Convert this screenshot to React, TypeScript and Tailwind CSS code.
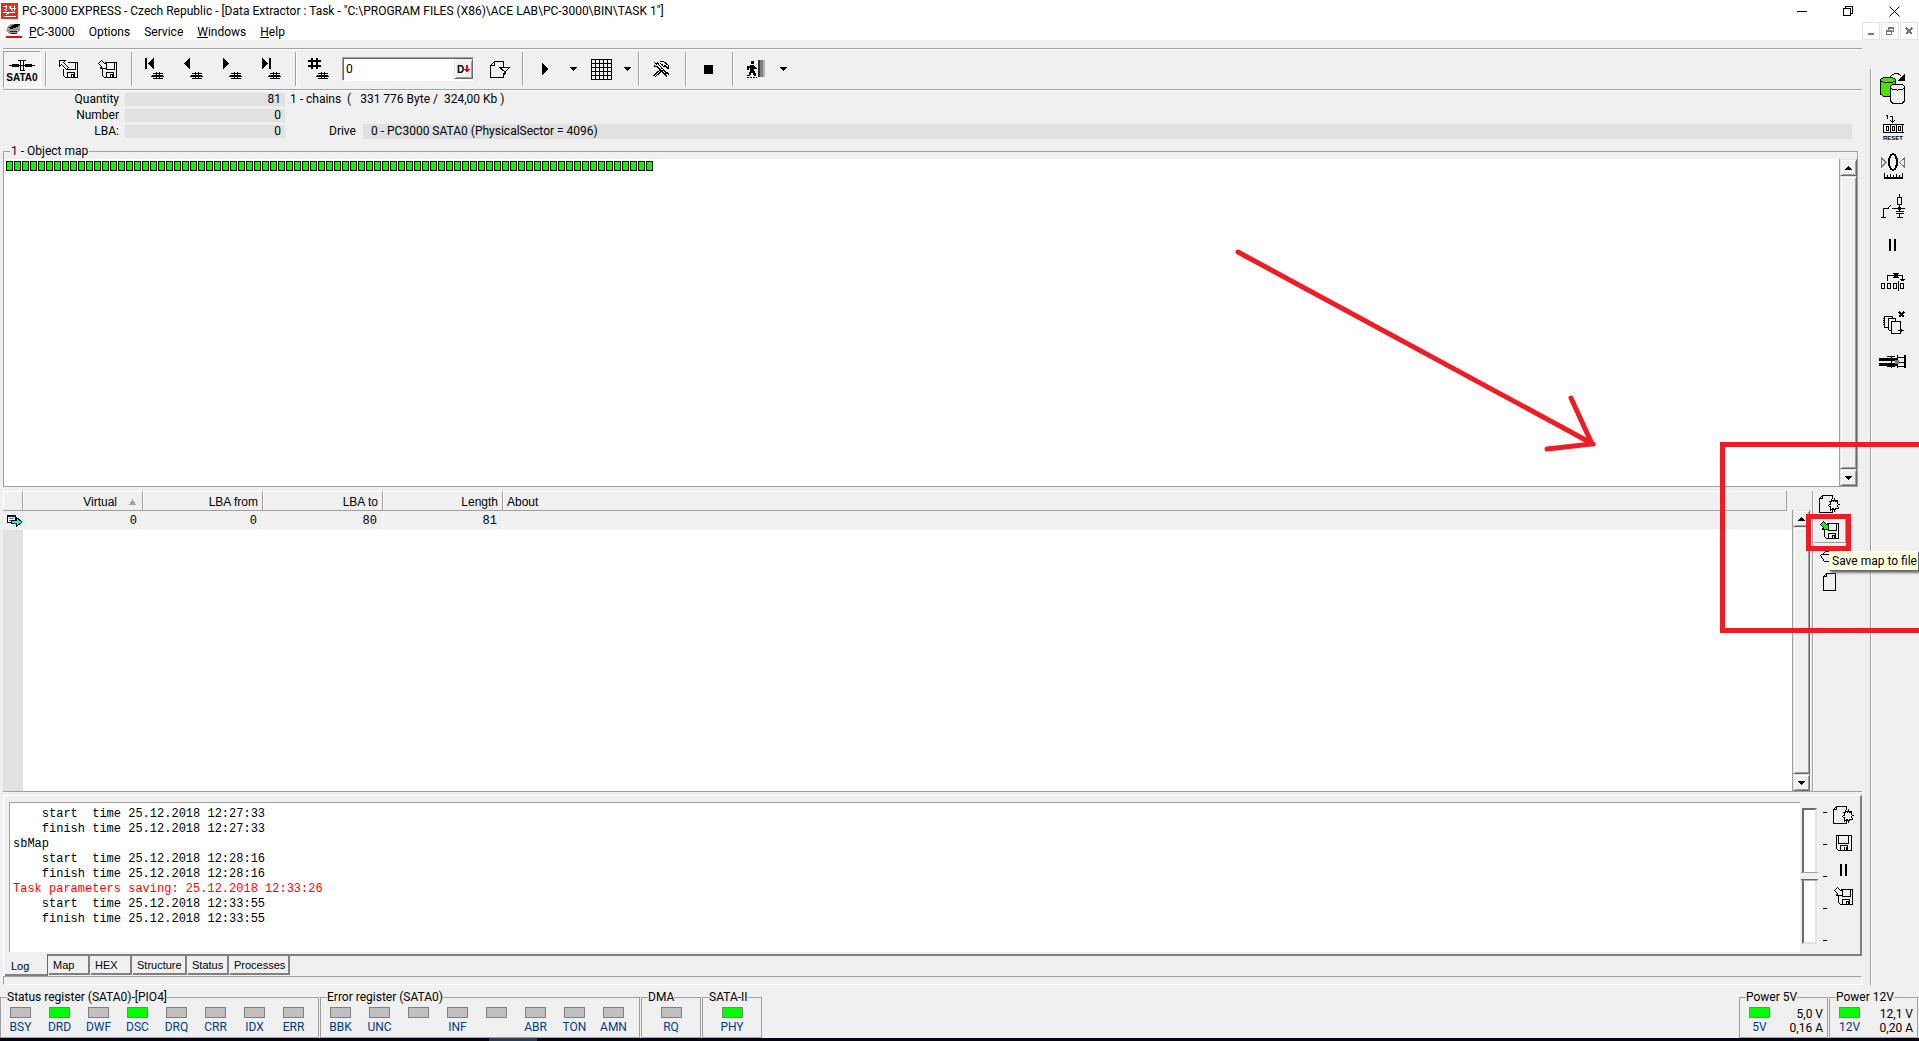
import type { ReactNode } from 'react';

type PxProps = { w: number; h: number; children: ReactNode };

// Small bitmap-like drawing, one unit per pixel
function Px({ w, h, children }: PxProps) {
  return (
    <svg
      width={w}
      height={h}
      viewBox={`0 0 ${w} ${h}`}
      fill="none"
      stroke="#000"
      shapeRendering="crispEdges"
      className="shrink-0"
      aria-hidden="true"
    >
      {children}
    </svg>
  );
}

function Floppy() {
  return (
    <>
      <path d="M8.5 2.5H18.5V17.5H6.5L4.5 15.5V8.5" />
      <path d="M16.5 3V9.5H7.5M8.5 17v-5h7v5M12 14.5h2v3h-2z" />
    </>
  );
}

function ImportIcon() {
  return (
    <Px w={20} h={19}>
      <Floppy />
      <path d="M.5 .5H6.5L4.5 2.5L9.5 7.5L7.5 9.5L2.5 4.5L.5 6.5Z" fill="#f0f0f0" />
    </Px>
  );
}

function SaveIcon({ fill = '#f0f0f0' }: { fill?: string }) {
  return (
    <Px w={20} h={19}>
      <Floppy />
      <path d="M3.5 .5L6.5 3.5L8.5 2.5V8.5H2.5L3.5 6.5L.5 3.5Z" fill={fill} />
    </Px>
  );
}

function DiskIcon() {
  return (
    <Px w={16} h={16}>
      <path d="M.5 .5H15.5V15.5H2.5L.5 13.5ZM2.5 .5V8.5H12.5V.5M4.5 15V10.5h7V15M8.5 12v4M10 12v4" />
    </Px>
  );
}

function Chip() {
  return (
    <>
      <path d="M8 15.5h10M6 18h13M8 20.5h10" />
      <path d="M7 18h11" strokeWidth="2" />
      <path d="M11.5 14v7M14.5 14v7" />
    </>
  );
}

function FirstIcon() {
  return (
    <Px w={20} h={22}>
      <path d="M0 0h2v11h-2zM9 0v11L3 5.5z" fill="#000" stroke="none" />
      <Chip />
    </Px>
  );
}

function PrevIcon() {
  return (
    <Px w={20} h={22}>
      <path d="M6 0v11L0 5.5z" fill="#000" stroke="none" />
      <Chip />
    </Px>
  );
}

function NextIcon() {
  return (
    <Px w={20} h={22}>
      <path d="M0 0v11l6-5.5z" fill="#000" stroke="none" />
      <Chip />
    </Px>
  );
}

function LastIcon() {
  return (
    <Px w={20} h={22}>
      <path d="M0 0v11l6-5.5zM7 0h2v11h-2z" fill="#000" stroke="none" />
      <Chip />
    </Px>
  );
}

function HashIcon() {
  return (
    <Px w={22} h={22}>
      <path d="M4 0v11M9 0v11M0 3h13M0 8h13" strokeWidth="2" />
      <g transform="translate(2 0)">
        <Chip />
      </g>
    </Px>
  );
}

function SataIcon() {
  return (
    <Px w={26} h={13}>
      <path d="M0 6.5h26" />
      <path d="M3 6.5h7M16 6.5h7" strokeWidth="3" />
      <path d="M11.5 1v11M14.5 1v11M9 1.5h8M12 11.5h4" />
    </Px>
  );
}

function PageFilterIcon() {
  return (
    <Px w={21} h={19}>
      <path d="M13.5 7V1.5H4.5L.5 5.5V17.5H13.5V13M.5 5.5H4.5V1.5" />
      <path d="M9.5 7.5H19.5L15.5 11.5V13.5L14.5 14.5V11.5Z" fill="#f0f0f0" />
    </Px>
  );
}

function PageGearIcon() {
  return (
    <Px w={21} h={19}>
      <path d="M13.5 4V.5H3.5L.5 3.5V17.5H13.5V15M.5 3.5H3.5V.5" />
      <path
        d="M12.5 4.5L14.5 6.5L15.5 4.5L16.500 6.5L18.500 5.5V8.5L20 9.500L18.500 10.5L19.500 14L16.500 13.5L15.500 15.500L14.500 13.500L11.500 15V12L9.500 10.500L12 9L10.500 6.500H12.500Z"
        fill="#f0f0f0"
      />
    </Px>
  );
}

function PageIcon() {
  return (
    <Px w={14} h={19}>
      <path d="M3.5 .5H12.5V17.5H.5V3.5ZM.5 3.5H3.5V.5" />
    </Px>
  );
}

function FolderIcon() {
  return (
    <Px w={20} h={13}>
      <path d="M3.5 4.5V3.5L5.5 1.5H11.5V3.5H18.5M.5 4.5H18.5V11.5H4.5L.5 5.5" />
    </Px>
  );
}

function PlayIcon() {
  return (
    <Px w={7} h={12}>
      <path d="M0 0v12l7-6z" fill="#000" stroke="none" />
    </Px>
  );
}

function CaretIcon() {
  return (
    <Px w={7} h={4}>
      <path d="M0 0h7l-3.5 4z" fill="#000" stroke="none" />
    </Px>
  );
}

function GridIcon() {
  return (
    <Px w={21} h={21}>
      <path d="M.5 .5h20v20H.5zM4.5 0v21M8.5 0v21M12.5 0v21M16.5 0v21M0 4.5h21M0 8.5h21M0 12.5h21M0 16.5h21" />
    </Px>
  );
}

function ToolsIcon() {
  return (
    <Px w={17} h={16}>
      <path d="M1.5 1.5L3.5 3.5L4.5 1.5L6 4L13.5 12L12 13.5L4.5 6L1.5 5.5V3.500" />
      <path d="M12 13.500l2 2M14 11.500l2 2" />
      <path d="M6.500 .5H10.500L15.500 4.500V7.500L13.500 6.500L12.500 4.500L10.500 5.500L9 3.500L7 2" />
      <path d="M9.500 6.500L1 14.500L2.500 15.500L10.500 8.500" />
    </Px>
  );
}

function ExitIcon() {
  return (
    <Px w={20} h={19}>
      <path d="M5 1h3v3H5zM4 5h4v5H4zM1 6h3v2H3v2H1zM8 6l3 2v1H8zM4 10h4l2 4v2H8l-2-4-2 4H1v-1h2z" fill="#000" stroke="none" />
      <path d="M1 17.5h10" strokeDasharray="2 1" />
      <path d="M12 0h2v17h-2z" fill="#333" stroke="none" />
      <path d="M14 0h3v17h-3z" fill="#808080" stroke="none" />
      <path d="M17 0h2v17h-2z" fill="#b5b5b5" stroke="none" />
    </Px>
  );
}

function PauseIcon() {
  return (
    <Px w={8} h={12}>
      <path d="M0 0h2v12H0zM5 0h2v12H5z" fill="#000" stroke="none" />
    </Px>
  );
}

function CopyDisksIcon() {
  return (
    <Px w={26} h={32}>
      <path d="M.5 7V21L3 23H15V7Z" fill="#4be100" stroke="none" />
      <path d="M.5 7V21L3.5 23.5H10M15.5 7V12" />
      <ellipse cx="8" cy="7" rx="7.5" ry="2.5" fill="#4be100" />
      <path d="M10.5 14V28L13 30.5H22L24.5 28V14Z" fill="#f0f0f0" />
      <ellipse cx="17.5" cy="14" rx="7" ry="3" fill="#f0f0f0" />
      <path d="M10 4L12 2L15 .5H18L21 3" />
      <path d="M25 0v8h-7z" fill="#000" stroke="none" />
    </Px>
  );
}

function ResetIcon() {
  return (
    <Px w={21} h={27}>
      <path d="M3 1.5h1.5V5M7 2.5h2.5V8M7 6l2.5 2.5L12 6" />
      <path d="M0 10.5H21M0 18.5H21M.5 10v9M7.5 10v9M13.5 10v9M19.5 10v9M3 12.5h2v4H3zM9.5 12.5h2v4h-2zM15.5 12.5h2v4h-2z" />
      <text x="0" y="26" fontSize="6" fontWeight="700" fontFamily="Liberation Sans, sans-serif" fill="#000" stroke="none">
        RESET
      </text>
    </Px>
  );
}

function ZeroIcon() {
  return (
    <Px w={24} h={27}>
      <ellipse cx="12" cy="9" rx="4" ry="8" strokeWidth="2" />
      <path d="M.5 5V14L5 9.5ZM23.5 5V14L18.5 9.5Z" stroke="#777" />
      <path d="M3 25H22" strokeWidth="2" />
      <path d="M3.5 20v4M6.5 22v2M9.5 21v3M12.5 22v2M15.5 21v3M18.5 22v2M21.5 20v4" />
    </Px>
  );
}

function CircuitIcon() {
  return (
    <Px w={24} h={24}>
      <path d="M0 23.5h5M2.5 23V14.5H7L10 11M11 14.5H24M18.5 0v3M16.5 3.5h4v7h-4zM18.5 11v6M15 17.5h8M15 19.5h8M18.5 20v3M16 23.5h6" />
      <path d="M17 13h3v3h-3z" fill="#000" stroke="none" />
    </Px>
  );
}

function SkipIcon() {
  return (
    <Px w={24} h={20}>
      <path d="M.5 11.5h3v5h-3zM6.5 11.5h3v5h-3zM12.5 11.5h3v5h-3zM19.5 11.5h3v5h-3zM17.5 9v10M6.5 9V3.5H21.5V7M19 7.5h5M20 8.5h3" />
      <path d="M13 1l4 5M17 1l-4 5" strokeWidth="2" />
    </Px>
  );
}

function PagesIcon() {
  return (
    <Px w={23} h={24}>
      <path d="M2.5 16V5.5h8V8M1 7.5h2M1 9.5h2M1 11.5h2M1 13.5h2M2 16.5h5" />
      <path d="M6.5 19V7.5h7V11M6.5 19.5h3" />
      <path d="M9.5 10.5h9v12h-9z" fill="#f0f0f0" />
      <path d="M16 19.5h6M19 18v3" />
      <path d="M17 1l5 5M22 1l-5 5" strokeWidth="2" />
    </Px>
  );
}

function ConnectorIcon() {
  return (
    <Px w={28} h={14}>
      <path d="M0 4h18M0 9h18" strokeWidth="3" />
      <path d="M8 1.5h8M8 11.5h8M12 1v12M18.5 0v13M18 2.5h8M18 7h8M18 11.5h8" />
      <path d="M26 0v13" strokeWidth="2" />
      <path d="M16 5h4v4h-4z" fill="#777" stroke="none" />
    </Px>
  );
}

function AppIcon() {
  return (
    <Px w={17} h={16}>
      <path d="M0 0h17v16H0z" fill="#e8291c" stroke="none" />
      <path d="M2 3.5h3M5 2v4M3 6l3 2M8 3l4 5M8 6V3.5h3M13.5 2v6M11 5.5h4M2 9.5h12M3 13.5h12M5 12l4-3" stroke="#fff" />
    </Px>
  );
}

function DocIcon() {
  return (
    <Px w={16} h={14}>
      <path d="M2 2L5 0H14V6L10 10H4L0 7Z" fill="#999" stroke="none" />
      <path d="M2 4L9 0H14L12 3L5 5Z" fill="#000" stroke="none" />
      <path d="M4 7.5h7M5 9.5h6" stroke="#222" />
      <path d="M0 13h16" stroke="#f00" strokeWidth="2" />
    </Px>
  );
}

const raised =
  'bg-[#f0f0f0] border border-t-[#e3e3e3] border-l-[#e3e3e3] border-r-[#696969] border-b-[#696969] shadow-[inset_1px_1px_0_#fff,inset_-1px_-1px_0_#a0a0a0]';

function ToolButton({ label, className = 'w-[39px]', children }: { label: string; className?: string; children: ReactNode }) {
  return (
    <button type="button" aria-label={label} className={`flex h-full shrink-0 items-center justify-center ${className}`}>
      {children}
    </button>
  );
}

function Separator() {
  return <div className="ml-1 mr-0.5 h-[34px] w-0.5 shrink-0 border-l border-r border-l-[#a0a0a0] border-r-white" />;
}

function ScrollBar() {
  return (
    <div className="flex w-[18px] shrink-0 flex-col border-l border-[#a0a0a0] bg-[#f0f0f0]">
      <button type="button" aria-label="Scroll up" className={`flex h-[17px] shrink-0 items-center justify-center ${raised}`}>
        <Px w={7} h={4}>
          <path d="M0 4h7l-3.5-4z" fill="#000" stroke="none" />
        </Px>
      </button>
      <div className={`flex-1 ${raised}`} />
      <button type="button" aria-label="Scroll down" className={`flex h-[17px] shrink-0 items-center justify-center ${raised}`}>
        <CaretIcon />
      </button>
    </div>
  );
}

function TitleBar() {
  return (
    <header className="bg-white">
      <div className="flex h-[22px] items-center">
        <div className="ml-px">
          <AppIcon />
        </div>
        <h1 className="ml-1 flex-1 text-xs">
          PC-3000 EXPRESS - Czech Republic - [Data Extractor : Task - "C:\PROGRAM FILES (X86)\ACE LAB\PC-3000\BIN\TASK 1"]
        </h1>
        <button type="button" aria-label="Minimize" className="flex w-[46px] justify-center">
          <Px w={10} h={10}>
            <path d="M0 5.5h10" />
          </Px>
        </button>
        <button type="button" aria-label="Restore" className="flex w-[46px] justify-center">
          <Px w={10} h={10}>
            <path d="M.5 2.5h7v7h-7zM2.5 2V.5h7v7H8" />
          </Px>
        </button>
        <button type="button" aria-label="Close" className="flex w-[46px] justify-center">
          <svg width="11" height="11" viewBox="0 0 11 11" stroke="#000" aria-hidden="true">
            <path d="M.5 .5l10 10M10.5 .5l-10 10" />
          </svg>
        </button>
        <div className="w-0.5" />
      </div>
      <div className="flex h-[18px] items-center">
        <div className="ml-1.5">
          <DocIcon />
        </div>
        <nav className="ml-[7px] flex flex-1 gap-3.5 pt-0.5 text-xs">
          <button type="button"><u>P</u>C-3000</button>
          <button type="button">Options</button>
          <button type="button">Service</button>
          <button type="button"><u>W</u>indows</button>
          <button type="button"><u>H</u>elp</button>
        </nav>
        <div className="mr-px flex gap-px">
          <button type="button" aria-label="Minimize child" className="flex h-[18px] w-[18px] items-center justify-center border border-[#e3e3e3]">
            <Px w={8} h={8}>
              <path d="M1 7h6" stroke="#777" strokeWidth="2" />
            </Px>
          </button>
          <button type="button" aria-label="Restore child" className="flex h-[18px] w-[18px] items-center justify-center border border-[#e3e3e3]">
            <Px w={8} h={8}>
              <path d="M.5 3.5h5v4h-5zM0 4.5h6M2.5 3V.5h5v4H6M2 1.5h6" stroke="#777" />
            </Px>
          </button>
          <button type="button" aria-label="Close child" className="flex h-[18px] w-[18px] items-center justify-center border border-[#e3e3e3]">
            <Px w={8} h={8}>
              <path d="M1 1l6 6M7 1l-6 6" stroke="#777" strokeWidth="2" />
            </Px>
          </button>
        </div>
      </div>
    </header>
  );
}

function Toolbar() {
  return (
    <div className="flex h-[42px] items-center border-y border-[#a0a0a0] shadow-[inset_0_1px_0_#fff,0_1px_0_#fff]">
      <button
        type="button"
        className="flex h-[37px] w-[38px] shrink-0 flex-col items-center justify-center border border-r-white border-b-white border-l-[#a0a0a0] border-t-[#a0a0a0] bg-[#f4f4f4] pt-1"
      >
        <SataIcon />
        <span className="font-['Liberation_Sans',sans-serif] text-[10px] font-bold leading-3">SATA0</span>
      </button>
      <Separator />
      <ToolButton label="Load task"><ImportIcon /></ToolButton>
      <ToolButton label="Save task"><SaveIcon /></ToolButton>
      <Separator />
      <ToolButton label="First"><FirstIcon /></ToolButton>
      <ToolButton label="Previous"><PrevIcon /></ToolButton>
      <ToolButton label="Next"><NextIcon /></ToolButton>
      <ToolButton label="Last"><LastIcon /></ToolButton>
      <Separator />
      <ToolButton label="Go to number"><HashIcon /></ToolButton>
      <div className="ml-1 flex h-6 w-[132px] shrink-0 border border-b-white border-l-[#a0a0a0] border-r-white border-t-[#a0a0a0] bg-white shadow-[inset_1px_1px_0_#696969]">
        <input aria-label="Number" defaultValue="0" className="w-0 flex-1 pl-[3px] text-xs outline-none" />
        <button type="button" aria-label="Decimal" className={`my-px flex w-[19px] items-center justify-center ${raised}`}>
          <span className="font-['Liberation_Sans',sans-serif] text-[10px] font-bold">D</span>
          <Px w={6} h={8}>
            <path d="M2 0h2v4h2L3 8 0 4h2z" fill="#f00" stroke="none" />
          </Px>
        </button>
      </div>
      <ToolButton label="Filter" className="ml-2 w-9"><PageFilterIcon /></ToolButton>
      <Separator />
      <ToolButton label="Start"><PlayIcon /></ToolButton>
      <ToolButton label="Start options" className="w-[17px]"><CaretIcon /></ToolButton>
      <ToolButton label="Grid"><GridIcon /></ToolButton>
      <ToolButton label="Grid options" className="w-[13px]"><CaretIcon /></ToolButton>
      <Separator />
      <ToolButton label="Tools"><ToolsIcon /></ToolButton>
      <Separator />
      <ToolButton label="Stop">
        <Px w={9} h={9}>
          <path d="M0 0h9v9H0z" fill="#000" stroke="none" />
        </Px>
      </ToolButton>
      <Separator />
      <ToolButton label="Exit"><ExitIcon /></ToolButton>
      <ToolButton label="Exit options" className="w-[17px]"><CaretIcon /></ToolButton>
    </div>
  );
}

function InfoRow({ label, value, children }: { label: string; value: string; children?: ReactNode }) {
  return (
    <div className="flex h-4 items-center text-xs leading-4">
      <span className="w-[116px] text-right">{label}</span>
      <span className="ml-1.5 h-[13px] w-40 bg-[#e1e1e1] pr-1 text-right leading-[13px]">{value}</span>
      {children}
    </div>
  );
}

function ObjectMap() {
  return (
    <fieldset className="mr-1 flex min-h-0 grow-[345] basis-0 flex-col border border-b-0 border-[#a0a0a0]">
      <legend className="ml-1.5 px-px text-xs leading-4">1 - Object map</legend>
      <div className="flex h-full border-b border-[#a0a0a0] bg-white">
        <div className="flex flex-1 flex-wrap content-start gap-px pl-0.5 pt-0.5">
          {Array.from({ length: 81 }, (_, i) => (
            <div key={i} className="h-2.5 w-[7px] border border-black bg-[#00ff00]" />
          ))}
        </div>
        <ScrollBar />
      </div>
    </fieldset>
  );
}

function ChainTable() {
  const th = 'border-r border-b border-[#a0a0a0] px-1 pt-0.5 font-normal shadow-[inset_1px_1px_0_#fff]';
  const td = 'border-r border-b border-dotted border-white pr-[5px] pt-0.5 text-right';
  return (
    <div className="mt-1 flex min-h-0 grow-[301] basis-0 border-b border-[#a0a0a0]">
      <div className="flex flex-1 flex-col">
        <table className="mr-[5px] table-fixed border-separate border-spacing-0 font-['Liberation_Sans',Arial,sans-serif] text-xs leading-4">
          <colgroup>
            <col className="w-5" />
            <col className="w-[120px]" />
            <col className="w-[120px]" />
            <col className="w-[120px]" />
            <col className="w-[120px]" />
            <col />
          </colgroup>
          <thead>
            <tr className="h-5 text-right">
              <th className={th} aria-label="State" />
              <th className={th}>
                <span className="flex items-center justify-end gap-3 pr-0.5">
                  Virtual
                  <Px w={7} h={6}>
                    <path d="M0 6h7L3.5 0z" fill="#a0a0a0" stroke="none" />
                  </Px>
                </span>
              </th>
              <th className={th}>LBA from</th>
              <th className={th}>LBA to</th>
              <th className={th}>Length</th>
              <th className={`${th} text-left`}>About</th>
            </tr>
          </thead>
          <tbody>
            <tr className="h-[19px] font-['Liberation_Mono','Courier_New',monospace]">
              <td className="pl-1">
                <Px w={16} h={12}>
                  <path d="M.5 .5h8v7h-8z" fill="#fff" />
                  <path d="M0 1h9" stroke="#000080" strokeWidth="2" />
                  <path d="M2 3.5h5M2 5.5h3" stroke="#777" />
                  <path d="M4.5 5.5h5v-3l5.5 4.5-5.5 4.5v-3h-5z" fill="#0ff" />
                </Px>
              </td>
              <td className={td}>0</td>
              <td className={td}>0</td>
              <td className={td}>80</td>
              <td className={td}>81</td>
              <td className={td} />
            </tr>
          </tbody>
        </table>
        <div className="flex flex-1 bg-white">
          <div className="w-5 bg-[#e1e1e1]" />
        </div>
      </div>
      <div className="flex pt-[19px]">
        <ScrollBar />
      </div>
      <div className="ml-0.5 flex w-[50px] flex-col border-l border-[#a0a0a0] shadow-[inset_1px_0_0_#fff]">
        <button type="button" aria-label="New map" className="flex h-[26px] w-[33px] items-center justify-center"><PageGearIcon /></button>
        <button type="button" aria-label="Save map to file" className="flex h-[26px] w-[33px] items-center justify-center border border-b-[#a0a0a0] border-l-white border-r-[#a0a0a0] border-t-white">
          <SaveIcon fill="#00ff00" />
        </button>
        <button type="button" aria-label="Load map from file" className="flex h-[26px] w-[33px] items-center justify-center"><FolderIcon /></button>
        <button type="button" aria-label="Clear map" className="flex h-[26px] w-[33px] items-center justify-center"><PageIcon /></button>
      </div>
    </div>
  );
}

const log = [
  { text: '    start  time 25.12.2018 12:27:33' },
  { text: '    finish time 25.12.2018 12:27:33' },
  { text: 'sbMap' },
  { text: '    start  time 25.12.2018 12:28:16' },
  { text: '    finish time 25.12.2018 12:28:16' },
  { text: 'Task parameters saving: 25.12.2018 12:33:26', error: true },
  { text: '    start  time 25.12.2018 12:33:55' },
  { text: '    finish time 25.12.2018 12:33:55' },
];

const tabs = [
  { name: 'Map', width: 'w-[41px]' },
  { name: 'HEX', width: 'w-[41px]' },
  { name: 'Structure', width: 'w-[54px]' },
  { name: 'Status', width: 'w-[41px]' },
  { name: 'Processes', width: 'w-[60px]' },
];

function LogPanel() {
  return (
    <div className="mt-[3px] border-l border-white pl-px">
      <div className="flex h-[161px] border-b-2 border-r-2 border-t border-b-[#808080] border-r-[#808080] border-t-white pl-1 pt-1.5">
        <div className="h-[150px] flex-1 whitespace-pre border-l border-t border-[#a0a0a0] bg-white pl-[3px] pt-1 font-['Liberation_Mono','Courier_New',monospace] text-xs leading-[15px]">
          {log.map((line, i) => (
            <div key={i} className={line.error ? 'text-[#ff0000]' : ''}>{line.text}</div>
          ))}
        </div>
        <input
          type="range"
          aria-label="Log detail"
          min={0}
          max={4}
          defaultValue={2}
          className="ml-0.5 mt-1.5 h-[136px] w-5 appearance-none bg-transparent [writing-mode:vertical-lr] [&::-webkit-slider-runnable-track]:mr-[5px] [&::-webkit-slider-runnable-track]:w-[15px] [&::-webkit-slider-runnable-track]:border-2 [&::-webkit-slider-runnable-track]:border-b-[#e3e3e3] [&::-webkit-slider-runnable-track]:border-l-[#696969] [&::-webkit-slider-runnable-track]:border-r-[#e3e3e3] [&::-webkit-slider-runnable-track]:border-t-[#696969] [&::-webkit-slider-runnable-track]:bg-white [&::-webkit-slider-thumb]:-ml-[3px] [&::-webkit-slider-thumb]:h-[9px] [&::-webkit-slider-thumb]:w-5 [&::-webkit-slider-thumb]:appearance-none [&::-webkit-slider-thumb]:border-b-2 [&::-webkit-slider-thumb]:border-t [&::-webkit-slider-thumb]:border-b-[#696969] [&::-webkit-slider-thumb]:border-t-[#a0a0a0] [&::-webkit-slider-thumb]:bg-[#f0f0f0] [&::-webkit-slider-thumb]:[clip-path:polygon(0_0,80%_0,100%_50%,80%_100%,0_100%)]"
        />
        <div className="mb-2 ml-px mt-2.5 flex h-[129px] w-1 flex-col justify-between">
          <div className="h-px bg-black" />
          <div className="h-px bg-black" />
          <div className="h-px bg-black" />
          <div className="h-px bg-black" />
          <div className="h-px bg-black" />
        </div>
        <div className="flex w-[33px] flex-col items-center">
          <button type="button" aria-label="Clear log" className="flex h-[27px] items-center"><PageGearIcon /></button>
          <button type="button" aria-label="Save log" className="flex h-[27px] items-center"><DiskIcon /></button>
          <button type="button" aria-label="Pause log" className="flex h-[27px] items-center"><PauseIcon /></button>
          <button type="button" aria-label="Save log as" className="flex h-[27px] items-center"><SaveIcon /></button>
        </div>
      </div>
      <div role="tablist" className="-mt-0.5 flex h-[22px] items-start gap-px font-['Liberation_Sans',Arial,sans-serif] text-[11px]">
        <button type="button" role="tab" aria-selected="true" className="h-[22px] w-[43px] border-b-2 border-r border-b-[#808080] border-r-[#696969] bg-[#f0f0f0] pl-1.5 pt-1 text-left leading-4">
          Log
        </button>
        {tabs.map((tab) => (
          <button
            key={tab.name}
            type="button"
            role="tab"
            aria-selected="false"
            className={`mt-0.5 h-[19px] border-b-2 border-r-2 border-b-[#808080] border-r-[#808080] pl-1 text-left leading-4 ${tab.width}`}
          >
            {tab.name}
          </button>
        ))}
      </div>
    </div>
  );
}

function Sidebar() {
  return (
    <aside className="mt-[29px] flex w-[49px] shrink-0 flex-col border-l border-[#a0a0a0] pr-1 shadow-[inset_1px_0_0_#fff]">
      <button type="button" aria-label="Copy disk" className="flex h-[39px] items-center justify-center"><CopyDisksIcon /></button>
      <button type="button" aria-label="Reset" className="flex h-[39px] items-center justify-center"><ResetIcon /></button>
      <button type="button" aria-label="Recalibrate" className="flex h-[39px] items-center justify-center"><ZeroIcon /></button>
      <button type="button" aria-label="Power" className="flex h-[39px] items-center justify-center"><CircuitIcon /></button>
      <button type="button" aria-label="Pause" className="flex h-[39px] items-center justify-center"><PauseIcon /></button>
      <button type="button" aria-label="Skip sectors" className="flex h-[39px] items-center justify-center pb-1"><SkipIcon /></button>
      <button type="button" aria-label="Close pages" className="flex h-[39px] items-center justify-center"><PagesIcon /></button>
      <button type="button" aria-label="Connector" className="flex h-[39px] items-center justify-center"><ConnectorIcon /></button>
    </aside>
  );
}

function Led({ name, on }: { name: string; on?: boolean }) {
  return (
    <div className="flex w-[39px] flex-col items-center">
      <div className={`h-[11px] w-[21px] border border-[#808080] ${on ? 'bg-[#00ff00]' : 'bg-[#c0c0c0]'}`} />
      <span className="mt-px h-4 text-xs leading-4 text-[#003c82]">{name}</span>
    </div>
  );
}

function Group({ title, children, className = '' }: { title: string; children: ReactNode; className?: string }) {
  return (
    <fieldset className={`h-[49px] border border-[#a0a0a0] ${className}`}>
      <legend className="ml-1.5 text-xs leading-4">{title}</legend>
      <div className="flex pt-0.5">{children}</div>
    </fieldset>
  );
}

function Power({ title, name, volts, amps }: { title: string; name: string; volts: string; amps: string }) {
  return (
    <Group title={title} className="w-[89px]">
      <Led name={name} on />
      <div className="flex-1 pr-1 text-right text-xs leading-[14px]">
        <div>{volts}</div>
        <div>{amps}</div>
      </div>
    </Group>
  );
}

function StatusBar() {
  return (
    <footer className="mt-1 flex gap-px pr-px">
      <Group title="Status register (SATA0)-[PIO4]" className="w-[319px]">
        <Led name="BSY" />
        <Led name="DRD" on />
        <Led name="DWF" />
        <Led name="DSC" on />
        <Led name="DRQ" />
        <Led name="CRR" />
        <Led name="IDX" />
        <Led name="ERR" />
      </Group>
      <Group title="Error register (SATA0)" className="w-[320px]">
        <Led name="BBK" />
        <Led name="UNC" />
        <Led name="" />
        <Led name="INF" />
        <Led name="" />
        <Led name="ABR" />
        <Led name="TON" />
        <Led name="AMN" />
      </Group>
      <Group title="DMA" className="w-[60px] *:justify-center">
        <Led name="RQ" />
      </Group>
      <Group title="SATA-II" className="w-[60px] *:justify-center">
        <Led name="PHY" on />
      </Group>
      <div className="flex-1" />
      <Power title="Power 5V" name="5V" volts="5,0 V" amps="0,16 A" />
      <Power title="Power 12V" name="12V" volts="12,1 V" amps="0,20 A" />
    </footer>
  );
}

// Red marks drawn over the window
function Annotations() {
  return (
    <div className="pointer-events-none absolute inset-0 overflow-hidden">
      <svg width="366" height="206" viewBox="0 0 366 206" fill="none" stroke="#ee1c24" strokeWidth="5" strokeLinecap="round" className="absolute right-[318px] top-[247px]">
        <path d="M3 5L358 197M336 151L357 197L312 202" />
      </svg>
      <div className="absolute -right-2 top-[442px] h-[191px] w-[207px] border-[5px] border-[#ee1c24]" />
      <div className="absolute right-[68px] top-[514px] h-[37px] w-[45px] border-[5px] border-[#ee1c24]" />
      <div role="tooltip" className="absolute right-0 top-[551px] flex h-5 w-[90px] items-center whitespace-nowrap border border-b-[#646464] border-l-[#ffffe1] border-r-[#646464] border-t-[#ffffe1] bg-[#ffffe1] pl-0.5 text-xs shadow-[2px_2px_2px_#777]">
        Save map to file
      </div>
    </div>
  );
}

export default function App() {
  return (
    <div className="relative flex min-h-screen flex-col overflow-hidden bg-[#f0f0f0] font-[Roboto,'Open_Sans',sans-serif] text-black">
      <TitleBar />
      <div className="flex flex-1">
        <main className="mr-2 flex min-w-0 flex-1 flex-col pl-[3px] pt-2">
          <Toolbar />
          <div className="mb-1 pt-px">
            <InfoRow label="Quantity" value="81">
              <span className="ml-[5px] whitespace-pre">{'1 - chains  (   331 776 Byte /  324,00 Kb )'}</span>
            </InfoRow>
            <InfoRow label="Number" value="0" />
            <InfoRow label="LBA:" value="0">
              <span className="ml-[44px] w-[27px]">Drive</span>
              <span className="ml-[7px] mr-2.5 h-[15px] flex-1 bg-[#e1e1e1] pl-2 leading-[15px]">0 - PC3000 SATA0 (PhysicalSector = 4096)</span>
            </InfoRow>
          </div>
          <ObjectMap />
          <ChainTable />
          <LogPanel />
          <div className="h-[9px] border border-b-white border-l-[#a0a0a0] border-r-white border-t-[#a0a0a0]" />
        </main>
        <Sidebar />
      </div>
      <StatusBar />
      <div className="h-[3px] bg-[#03040f]">
        <div className="ml-[489px] h-full w-12 bg-[#2b3a50]" />
      </div>
      <Annotations />
    </div>
  );
}
